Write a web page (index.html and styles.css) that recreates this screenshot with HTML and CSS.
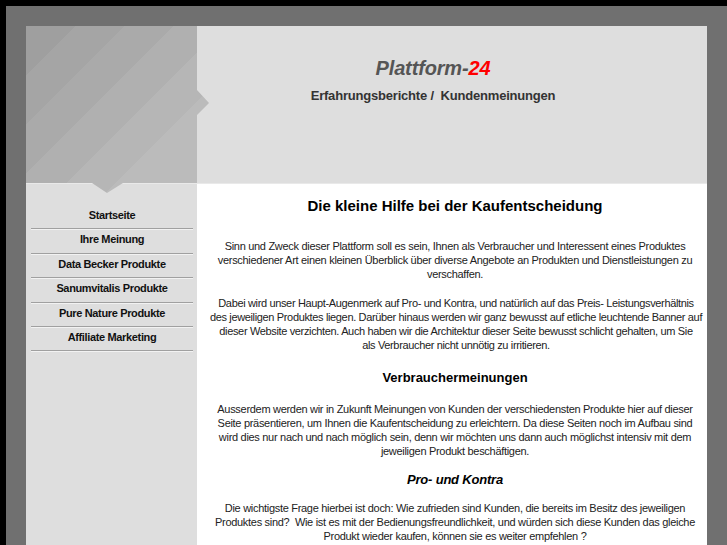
FILE: index.html
```html
<!DOCTYPE html>
<html lang="de">
<head>
<meta charset="utf-8">
<title>Plattform-24</title>
<link rel="stylesheet" href="styles.css">
</head>
<body>
<div class="frame">
  <div class="page">
    <div class="header">
      <div class="header-art">
        <div class="art-shape"></div>
      </div>
      <div class="header-main">
        <div class="brand">Plattform-<span class="brand-num">24</span></div>
        <div class="tagline">Erfahrungsberichte /&nbsp; Kundenmeinungen</div>
      </div>
    </div>
    <div class="body">
      <div class="sidebar">
        <ul class="nav">
          <li class="nav-item">Startseite</li>
          <li class="nav-item">Ihre Meinung</li>
          <li class="nav-item">Data Becker Produkte</li>
          <li class="nav-item">Sanumvitalis Produkte</li>
          <li class="nav-item">Pure Nature Produkte</li>
          <li class="nav-item">Affiliate Marketing</li>
        </ul>
      </div>
      <div class="content">
        <h1 class="h-main">Die kleine Hilfe bei der Kaufentscheidung</h1>
        <p class="p-first">Sinn und Zweck dieser Plattform soll es sein, Ihnen als Verbraucher und Interessent eines Produktes verschiedener Art einen kleinen Überblick über diverse Angebote an Produkten und Dienstleistungen zu verschaffen.</p>
        <p class="p-next">Dabei wird unser Haupt-Augenmerk auf Pro- und Kontra, und natürlich auf das Preis- Leistungsverhältnis<br>des jeweiligen Produktes liegen. Darüber hinaus werden wir ganz bewusst auf etliche leuchtende Banner auf<br>dieser Website verzichten. Auch haben wir die Architektur dieser Seite bewusst schlicht gehalten, um Sie<br>als Verbraucher nicht unnötig zu irritieren.</p>
        <h2 class="h-sub">Verbrauchermeinungen</h2>
        <p class="p-after-sub">Ausserdem werden wir in Zukunft Meinungen von Kunden der verschiedensten Produkte hier auf dieser Seite präsentieren, um Ihnen die Kaufentscheidung zu erleichtern. Da diese Seiten noch im Aufbau sind wird dies nur nach und nach möglich sein, denn wir möchten uns dann auch möglichst intensiv mit dem jeweiligen Produkt beschäftigen.</p>
        <h3 class="h-italic">Pro- und Kontra</h3>
        <p class="p-after-italic">Die wichtigste Frage hierbei ist doch: Wie zufrieden sind Kunden, die bereits im Besitz des jeweiligen Produktes sind?&nbsp; Wie ist es mit der Bedienungsfreundlichkeit, und würden sich diese Kunden das gleiche Produkt wieder kaufen, können sie es weiter empfehlen ?</p>
      </div>
    </div>
  </div>
</div>
</body>
</html>
```

FILE: styles.css
```css
html, body {
  margin: 0;
  padding: 0;
  background: #000;
}
body {
  font-family: "Liberation Sans", Arial, sans-serif;
  color: #222;
  overflow: hidden;
}
.frame {
  margin: 6px 0 0 6px;
  background: #707070;
  padding: 20px 0 0 20px;
  min-height: 560px;
}
.page {
  width: 681px;
  background: #dedede;
}
.header {
  display: flex;
  height: 157px;
  border-bottom: 1px solid #e9e9e9;
}
.header-art {
  position: relative;
  width: 171px;
  flex: none;
  z-index: 2;
}
.art-shape {
  position: absolute;
  left: 0;
  top: 0;
  width: 184px;
  height: 168px;
  background: linear-gradient(135deg,
    #9f9f9f 0 14%, #a5a5a5 14% 28%, #aaaaaa 28% 42%,
    #b0b0b0 42% 56%, #b6b6b6 56% 70%, #bbbbbb 70% 100%);
  clip-path: polygon(0 0, 171px 0, 171px 64px, 183px 77px, 171px 89px, 171px 157px,
    97px 157px, 81px 167px, 66px 157px, 0 157px);
}
.header-main {
  flex: 1;
  padding: 30px 38px 0 0;
  text-align: center;
}
.brand {
  font-size: 20px;
  line-height: 24px;
  font-weight: bold;
  font-style: italic;
  color: #555;
  letter-spacing: -0.15px;
}
.brand-num {
  color: #ff0000;
}
.tagline {
  margin-top: 8px;
  font-size: 13px;
  line-height: 16px;
  font-weight: bold;
  color: #333;
  letter-spacing: -0.2px;
}
.body {
  display: flex;
}
.sidebar {
  width: 171px;
  flex: none;
  background: #dedede;
  min-height: 380px;
}
.nav {
  list-style: none;
  margin: 0;
  padding: 22px 4px 0 5px;
}
.nav-item {
  height: 22.4px;
  line-height: 19px;
  text-align: center;
  font-size: 11px;
  font-weight: bold;
  color: #111;
  letter-spacing: -0.35px;
  border-bottom: 1px solid #a0a0a0;
  box-shadow: 0 1px 0 #f2f2f2;
  margin-bottom: 1px;
}
.content {
  flex: 1;
  background: #fff;
  padding: 13px 4px 0 10px;
  text-align: center;
  min-height: 380px;
}
.content p {
  margin: 0;
  font-size: 11px;
  line-height: 14px;
  color: #222;
  letter-spacing: -0.3px;
}
.h-main {
  margin: 0;
  font-size: 15px;
  line-height: 18px;
  font-weight: bold;
  color: #000;
}
.p-first {
  margin-top: 24px !important;
}
.content .p-next {
  margin: 15px -7px 0 -5px;
  letter-spacing: -0.35px;
  white-space: nowrap;
}
.h-sub {
  margin: 18px 0 0;
  font-size: 13px;
  line-height: 16px;
  font-weight: bold;
  color: #000;
}
.p-after-sub {
  margin-top: 16px !important;
}
.h-italic {
  margin: 13px 0 0;
  font-size: 13px;
  line-height: 17px;
  font-weight: bold;
  font-style: italic;
  color: #000;
  letter-spacing: -0.2px;
}
.p-after-italic {
  margin-top: 13px !important;
}
```
